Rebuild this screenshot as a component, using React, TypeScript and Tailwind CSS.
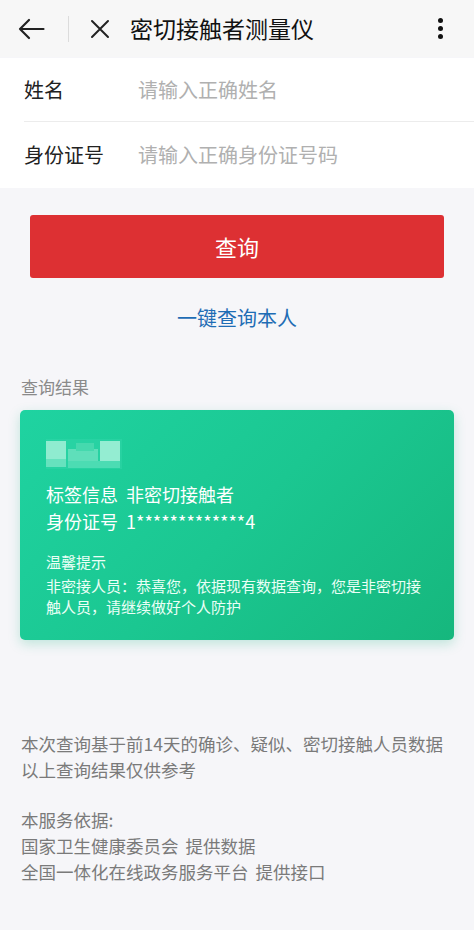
import React from "react";

export default function App() {
  const font = { fontFamily: '"Noto Sans CJK SC", "Noto Sans", sans-serif' };
  return (
    <div className="w-[474px] h-[930px] bg-[#f6f6f9] flex flex-col overflow-hidden" style={font}>
      {/* Header */}
      <div className="h-[57px] bg-[#f7f7f7] flex items-center shrink-0">
        <div className="w-[68px] flex justify-start pl-[18px]">
          <svg width="27" height="22" viewBox="0 0 27 22" fill="none" stroke="#222" strokeWidth="2.2" strokeLinecap="round" strokeLinejoin="round">
            <path d="M25.5 11H2M11 2L2 11l9 9" />
          </svg>
        </div>
        <div className="w-[1px] h-[26px] bg-[#dcdcdc]" />
        <div className="w-[61px] flex justify-center">
          <svg width="20" height="20" viewBox="0 0 20 20" fill="none" stroke="#222" strokeWidth="2" strokeLinecap="round">
            <path d="M2 2l16 16M18 2L2 18" />
          </svg>
        </div>
        <div className="text-[23px] text-[#111] leading-none">密切接触者测量仪</div>
        <div className="flex-1" />
        <div className="w-[20px] mr-[24px] flex flex-col items-center gap-[3px]">
          <div className="w-[5px] h-[5px] rounded-full bg-[#111]" />
          <div className="w-[5px] h-[5px] rounded-full bg-[#111]" />
          <div className="w-[5px] h-[5px] rounded-full bg-[#111]" />
        </div>
      </div>

      {/* Form */}
      <div className="mt-[1px] bg-white pl-[24px] shrink-0">
        <div className="h-[64px] flex items-center border-b border-[#ececec]">
          <div className="w-[114px] text-[20px] text-[#222]">姓名</div>
          <div className="text-[20px] text-[#b0b0b0]">请输入正确姓名</div>
        </div>
        <div className="h-[66px] flex items-center">
          <div className="w-[114px] text-[20px] text-[#222]">身份证号</div>
          <div className="text-[20px] text-[#b0b0b0]">请输入正确身份证号码</div>
        </div>
      </div>

      {/* Button */}
      <div className="px-[30px] pt-[27px]">
        <div className="h-[63px] bg-[#dd3033] rounded-[3px] flex items-center justify-center text-white text-[22px]">查询</div>
      </div>
      <div className="pt-[25px] text-center text-[20px] text-[#1f6db5]">一键查询本人</div>

      <div className="pl-[21px] pt-[41px] text-[17px] text-[#8a8a8a]">查询结果</div>

      {/* Card */}
      <div className="mx-[20px] mt-[10px] h-[230px] rounded-[5px] bg-[linear-gradient(135deg,#1fd3a1_0%,#1bc791_50%,#16b77d_100%)] shadow-[0_4px_12px_rgba(30,180,130,0.25)] pl-[26px] pt-[29px] text-white">
        <svg width="76" height="30" viewBox="0 0 76 30">
          <rect x="0" y="0" width="76" height="30" fill="#3fdcb2" opacity="0.3" />
          <rect x="0" y="2" width="20" height="18" fill="#8fecd0" />
          <rect x="0" y="20" width="20" height="8" fill="#66e2be" />
          <rect x="22" y="10" width="30" height="12" fill="#5fdfba" />
          <rect x="30" y="4" width="18" height="8" fill="#45d9ae" />
          <rect x="54" y="2" width="20" height="22" fill="#94edd2" />
          <rect x="22" y="22" width="52" height="7" fill="#4cdcb3" />
        </svg>
        <div className="mt-[12px] text-[18px] leading-[27px]">
          <span>标签信息</span>
          <span className="ml-[8px]">非密切接触者</span>
        </div>
        <div className="text-[18px] leading-[27px]">
          <span>身份证号</span>
          <span className="ml-[8px]">1*************4</span>
        </div>
        <div className="mt-[16px] text-[15px] leading-[22px] text-[#eafff6]">温馨提示</div>
        <div className="mt-[2px] text-[15px] leading-[21px] text-[#eafff6] whitespace-nowrap">
          <div>非密接人员：恭喜您，依据现有数据查询，您是非密切接</div>
          <div>触人员，请继续做好个人防护</div>
        </div>
      </div>

      {/* Footer */}
      <div className="pl-[21px] pt-[91px] text-[17.5px] leading-[26px] text-[#7a7a7a]">
        <div>本次查询基于前14天的确诊、疑似、密切接触人员数据</div>
        <div>以上查询结果仅供参考</div>
        <div className="mt-[24px]">本服务依据:</div>
        <div>
          国家卫生健康委员会<span className="ml-[7px]">提供数据</span>
        </div>
        <div>
          全国一体化在线政务服务平台<span className="ml-[7px]">提供接口</span>
        </div>
      </div>
    </div>
  );
}
